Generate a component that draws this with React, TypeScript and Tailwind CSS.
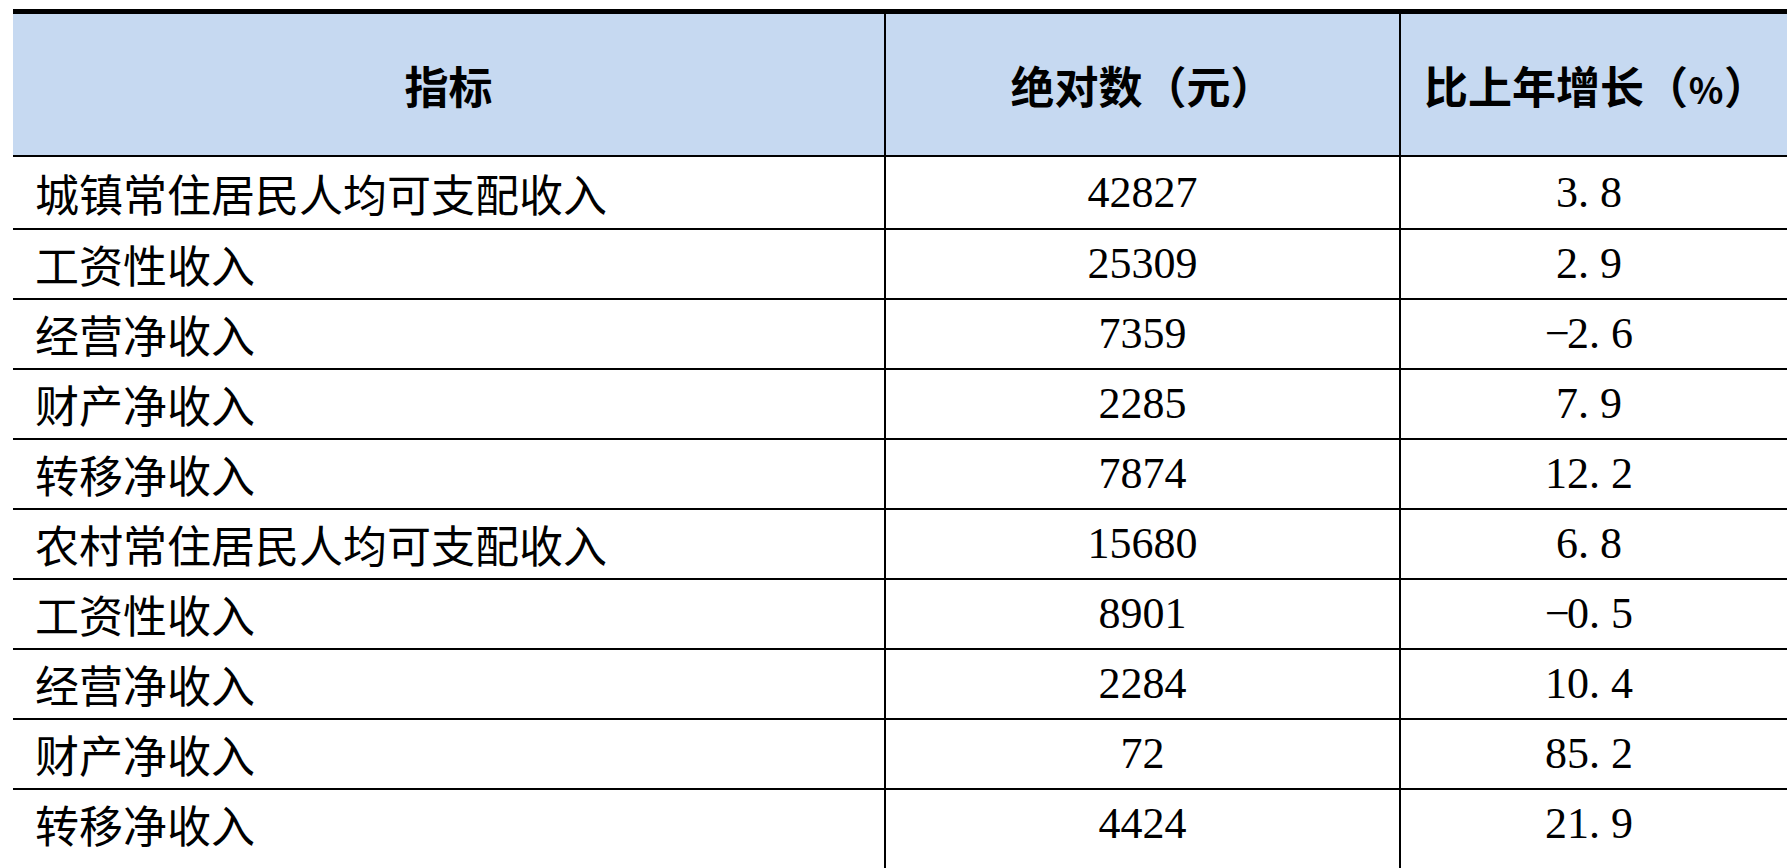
import React from "react";

const rows: [string, string, string][] = [
  ["城镇常住居民人均可支配收入", "42827", "3.8"],
  ["工资性收入", "25309", "2.9"],
  ["经营净收入", "7359", "-2.6"],
  ["财产净收入", "2285", "7.9"],
  ["转移净收入", "7874", "12.2"],
  ["农村常住居民人均可支配收入", "15680", "6.8"],
  ["工资性收入", "8901", "-0.5"],
  ["经营净收入", "2284", "10.4"],
  ["财产净收入", "72", "85.2"],
  ["转移净收入", "4424", "21.9"],
];

const cjk = "font-['Noto_Sans_CJK_SC',sans-serif]";

function Num({ v }: { v: string }) {
  return (
    <span className="font-['Liberation_Serif',serif] text-[44px] leading-none text-black whitespace-nowrap">
      {v.split("").map((c, i) =>
        c === "." ? (
          <span key={i} className="inline-block w-[0.5em] text-left">
            .
          </span>
        ) : c === "-" ? (
          <span key={i} className="inline-block w-[0.5em] text-center">
            −
          </span>
        ) : (
          <span key={i}>{c}</span>
        )
      )}
    </span>
  );
}

export default function App() {
  return (
    <div className="w-[1787px] h-[868px] overflow-hidden bg-white pl-[13px] pt-[9px]">
      <div className="w-[1786px]">
        {/* header */}
        <div
          className={`grid grid-cols-[871px_515px_400px] h-[148px] border-t-[5px] border-b-2 border-black bg-[#c6d9f1] ${cjk} font-bold text-[44px] text-black`}
        >
          <div className="flex items-center justify-center">指标</div>
          <div className="flex items-center justify-center border-l-2 border-black">
            绝对数（元）
          </div>
          <div className="flex items-center justify-center border-l-2 border-black pr-[8px]">
            <span className="whitespace-nowrap">
              比上年增长（<span className="inline-block w-[36px] text-center text-[36px]">%</span>）
            </span>
          </div>
        </div>
        {rows.map((r, i) => (
          <div
            key={i}
            className={`grid grid-cols-[871px_515px_400px] border-b-2 border-black ${
              i === 0 ? "h-[73px]" : i === rows.length - 1 ? "h-[90px]" : "h-[70px]"
            }`}
          >
            <div
              className={`flex items-center pl-[22px] ${cjk} text-[44px] leading-none text-black ${
                i === rows.length - 1 ? "pb-[20px]" : ""
              }`}
            >
              {r[0]}
            </div>
            <div
              className={`flex items-center justify-center border-l-2 border-black ${
                i === rows.length - 1 ? "pb-[20px]" : ""
              }`}
            >
              <Num v={r[1]} />
            </div>
            <div
              className={`flex items-center justify-center border-l-2 border-black pr-[22px] ${
                i === rows.length - 1 ? "pb-[20px]" : ""
              }`}
            >
              <Num v={r[2]} />
            </div>
          </div>
        ))}
      </div>
    </div>
  );
}
